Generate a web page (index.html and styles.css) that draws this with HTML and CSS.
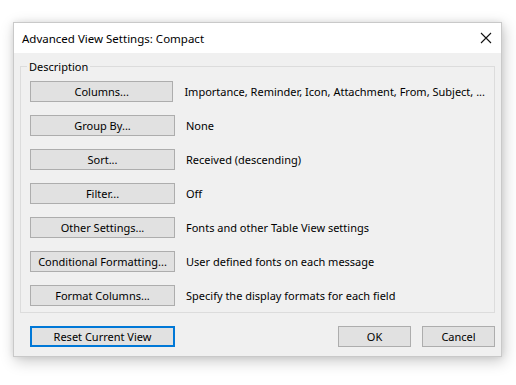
FILE: index.html
```html
<!DOCTYPE html>
<html>
<head>
<meta charset="utf-8">
<link rel="stylesheet" href="styles.css">
</head>
<body>
<div class="dialog">
  <div class="titlebar">
    <span class="title">Advanced View Settings: Compact</span>
    <svg class="close" width="12" height="12" viewBox="0 0 12 12"><path d="M1 1 L11 11 M11 1 L1 11" stroke="#111" stroke-width="1.1" fill="none"/></svg>
  </div>
  <div class="body">
    <fieldset class="group">
      <legend>Description</legend>
      <div class="row"><button class="btn wide">Columns...</button><span class="desc">Importance, Reminder, Icon, Attachment, From, Subject, ...</span></div>
      <div class="row"><button class="btn wide">Group By...</button><span class="desc">None</span></div>
      <div class="row"><button class="btn wide">Sort...</button><span class="desc">Received (descending)</span></div>
      <div class="row"><button class="btn wide">Filter...</button><span class="desc">Off</span></div>
      <div class="row"><button class="btn wide">Other Settings...</button><span class="desc">Fonts and other Table View settings</span></div>
      <div class="row"><button class="btn wide">Conditional Formatting...</button><span class="desc">User defined fonts on each message</span></div>
      <div class="row"><button class="btn wide">Format Columns...</button><span class="desc">Specify the display formats for each field</span></div>
    </fieldset>
    <div class="footer">
      <button class="btn wide default">Reset Current View</button>
      <div class="spacer"></div>
      <button class="btn small">OK</button>
      <button class="btn small">Cancel</button>
    </div>
  </div>
</div>
</body>
</html>
```

FILE: styles.css
```css
* { box-sizing: border-box; }
html, body {
  margin: 0;
  padding: 0;
  background: #ffffff;
  width: 516px;
  height: 385px;
  overflow: hidden;
}
body {
  font-family: "Noto Sans", "Open Sans", sans-serif;
  font-size: 11px;
  color: #000;
  padding: 22px 0 0 13px;
}
.dialog {
  width: 489px;
  height: 335px;
  border: 1px solid #c9c9c9;
  background: #f0f0f0;
  box-shadow: 2px 4px 14px rgba(0,0,0,0.22), 0 0 6px rgba(0,0,0,0.08);
  display: flex;
  flex-direction: column;
}
.titlebar {
  height: 30px;
  background: #fff;
  display: flex;
  align-items: center;
  padding: 0 9px 0 8px;
}
.title {
  flex: 1;
  font-size: 11.5px;
  line-height: 16px;
  padding-top: 1px;
}
.close {
  display: block;
}
.body {
  padding: 5px 6px 0 6px;
  display: flex;
  flex-direction: column;
}
.group {
  margin: 0;
  min-width: 0;
  border: 1px solid #dcdcdc;
  padding: 7px 9px 6px 9px;
  width: 475px;
  display: flex;
  flex-direction: column;
  gap: 13px;
}
.group legend {
  padding: 1px 2px 0 2px;
  margin-left: -3px;
  line-height: 15px;
  height: 16px;
}
.row {
  display: flex;
  align-items: center;
  height: 21px;
}
.btn {
  font-family: inherit;
  font-size: 11px;
  color: #000;
  background: #e1e1e1;
  border: 1px solid #adadad;
  height: 21px;
  padding: 0;
  margin: 0;
  line-height: 17px;
  text-align: center;
}
.wide { width: 145px; }
.desc {
  margin-left: 11px;
  white-space: nowrap;
}
.footer {
  display: flex;
  margin-top: 13px;
  padding-left: 10px;
}
.default {
  border: 2px solid #0078d7;
}
.spacer { flex: 1; }
.small { width: 73px; }
.small + .small { margin-left: 11px; }
```
